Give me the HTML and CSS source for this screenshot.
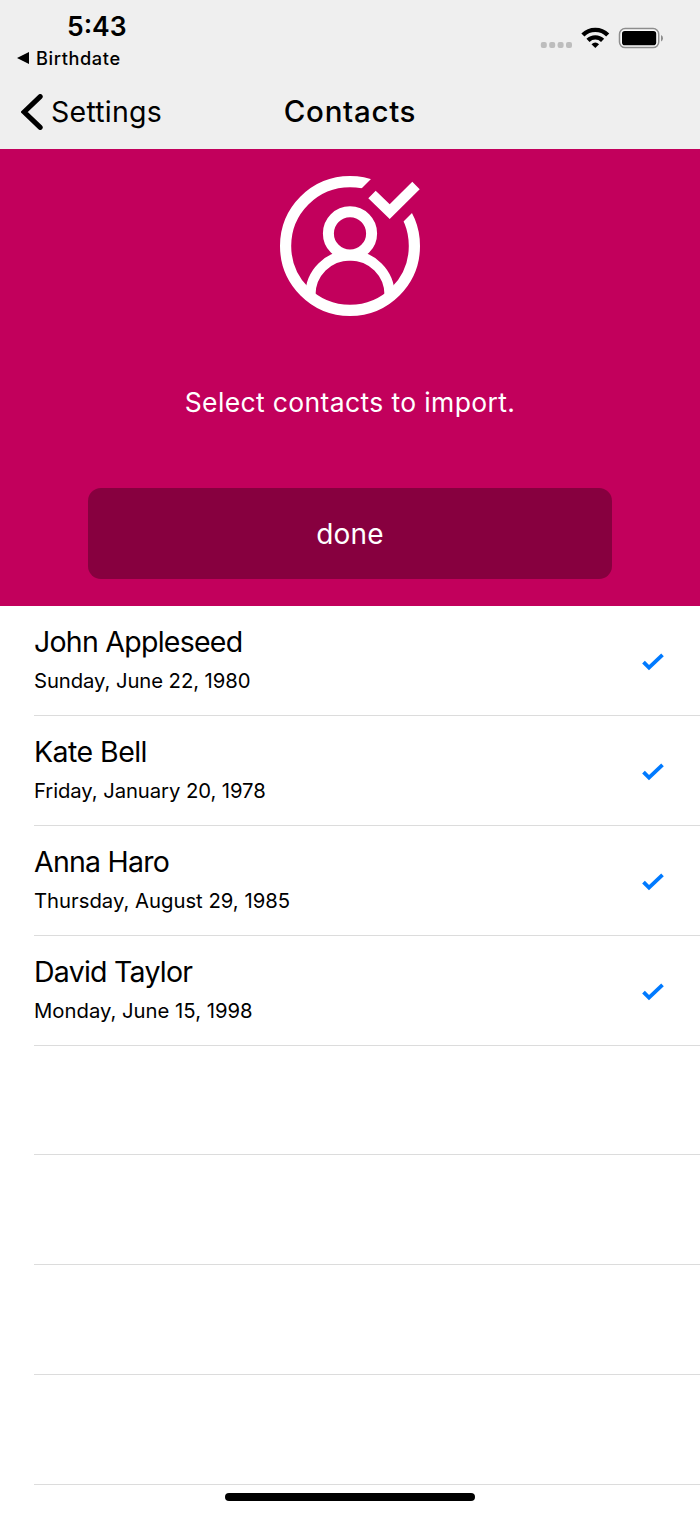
FILE: index.html
```html
<!DOCTYPE html>
<html lang="en">
<head>
<meta charset="utf-8">
<title>Contacts</title>
<link rel="stylesheet" href="styles.css">
</head>
<body>
<div class="screen">
  <header class="header">
    <div class="status">
      <div class="status-left">
        <div class="time">5:43</div>
        <div class="return"><svg class="return-icon" viewBox="0 0 12 12"><path d="M0 6 12 0V12Z"/></svg><span>Birthdate</span></div>
      </div>
      <svg class="status-icons" width="124" height="24" viewBox="540 26 124 24">
        <g fill="#bdbdbd"><rect x="540.8" y="42" width="6" height="6" rx="2"/><rect x="549.2" y="42" width="6" height="6" rx="2"/><rect x="557.6" y="42" width="6" height="6" rx="2"/><rect x="566" y="42" width="6" height="6" rx="2"/></g>
        <g fill="none" stroke="#000" stroke-width="4.4"><path d="M582.9 35A17.6 17.6 0 0 1 607.7 35"/><path d="M588 40.4A10.3 10.3 0 0 1 602.6 40.4"/></g>
        <path d="M591.5 44.2Q595.3 41 599.1 44.2L595.3 48Z"/>
        <rect x="619.5" y="28.6" width="39.2" height="19" rx="5.6" fill="#fafafa" stroke="#8d8d8d" stroke-width="1.5"/>
        <rect x="622" y="31" width="34.2" height="14.2" rx="2.8"/>
        <path d="M661 35Q663 36 663 38.2T661 41.4Z" fill="#8d8d8d"/>
      </svg>
    </div>
    <nav class="nav">
      <div class="back"><svg class="back-icon" viewBox="0 0 22 36"><path d="M19.2 2.6 3.2 18 19.2 33.4"/></svg><span class="back-label">Settings</span></div>
      <h1 class="title">Contacts</h1>
    </nav>
  </header>
  <section class="hero">
    <svg class="hero-icon" viewBox="280 176 140 140">
      <defs>
        <mask id="gap"><rect x="270" y="166" width="160" height="160" fill="#fff"/><path d="M380 170 358 192 372 205 402 223 432 193V170Z" fill="#000"/></mask>
        <clipPath id="disc"><circle cx="350" cy="246" r="65"/></clipPath>
      </defs>
      <g fill="none" stroke="#fff">
        <circle cx="350" cy="246" r="64.4" stroke-width="11.2" mask="url(#gap)"/>
        <circle cx="350" cy="233.4" r="21.6" stroke-width="11"/>
        <circle cx="350" cy="295" r="39.6" stroke-width="10.2" clip-path="url(#disc)"/>
      </g>
      <path d="M368.3 198.3 375.7 190.7 389.7 204.3 412.3 181.7 419.7 189.3 389.7 219Z" fill="#fff"/>
    </svg>
    <p class="prompt">Select contacts to import.</p>
    <button class="done">done</button>
  </section>
  <ul class="list">
    <li class="row"><div><div class="name">John Appleseed</div><div class="date tight">Sunday, June 22, 1980</div></div><svg class="check" viewBox="0 0 22 18"><path d="M1.5 9.2 7 14.6 20.5 1.8"/></svg></li>
    <li class="row"><div><div class="name loose">Kate Bell</div><div class="date tight">Friday, January 20, 1978</div></div><svg class="check" viewBox="0 0 22 18"><path d="M1.5 9.2 7 14.6 20.5 1.8"/></svg></li>
    <li class="row"><div><div class="name">Anna Haro</div><div class="date">Thursday, August 29, 1985</div></div><svg class="check" viewBox="0 0 22 18"><path d="M1.5 9.2 7 14.6 20.5 1.8"/></svg></li>
    <li class="row"><div><div class="name">David Taylor</div><div class="date">Monday, June 15, 1998</div></div><svg class="check" viewBox="0 0 22 18"><path d="M1.5 9.2 7 14.6 20.5 1.8"/></svg></li>
    <li class="row"></li>
    <li class="row"></li>
    <li class="row"></li>
    <li class="row"></li>
  </ul>
  <div class="home-bar"></div>
</div>
</body>
</html>
```
FILE: styles.css
```css
* { box-sizing: border-box; }
body { margin: 0; background: #fff; color: #000; font-family: Inter, "Liberation Sans", sans-serif; }
.screen { position: relative; width: 700px; height: 1515px; overflow: hidden; background: #fff; }
.header { height: 149px; background: #efefef; }
.status { display: flex; justify-content: space-between; height: 75px; padding: 9px 36px 0 17px; }
.status-icons { margin-top: 17px; }
.time { padding-left: 50px; font-size: 26.5px; line-height: 34px; font-weight: 600; }
.return { display: flex; align-items: center; gap: 7px; height: 30px; font-size: 18.2px; font-weight: 500; letter-spacing: 0.6px; }
.return-icon { width: 12px; height: 12px; }
.return span { line-height: 22px; }
.nav { display: grid; grid-template-columns: 1fr auto 1fr; align-items: center; height: 74px; padding: 0 21px; }
.back { display: flex; align-items: center; gap: 8px; font-size: 28.5px; letter-spacing: 0.25px; }
.back-label { line-height: 34px; }
.back-icon { width: 22px; height: 36px; fill: none; stroke: #000; stroke-width: 5; stroke-linecap: round; stroke-linejoin: miter; }
.title { margin: 0; padding-bottom: 2px; font-size: 29.5px; line-height: 36px; font-weight: 500; letter-spacing: 0.7px; }
.hero { display: flex; flex-direction: column; align-items: center; height: 457px; padding-top: 27px; background: #c2005c; color: #fff; }
.hero-icon { width: 140px; height: 140px; }
.prompt { margin: 66px 0 0; font-size: 26.5px; line-height: 40px; letter-spacing: 0.36px; }
.done { width: 524px; height: 91px; margin-top: 66px; padding: 0; border: 0; border-radius: 13px; background: #87003f; color: #fff; font: 400 28px Inter, sans-serif; letter-spacing: 0.2px; }
.list { margin: 0; padding: 0 0 0 34px; list-style: none; }
.row { display: flex; align-items: center; justify-content: space-between; height: 109.9px; padding-right: 36px; border-bottom: 1px solid #dcdcdc; }
.name { padding-bottom: 1px; font-size: 28.5px; line-height: 39px; letter-spacing: -0.75px; }
.name.loose { letter-spacing: -0.55px; }
.date { padding-top: 1px; font-size: 20.3px; line-height: 36px; }
.date.tight { letter-spacing: -0.08px; }
.check { width: 22px; height: 18px; margin-top: 3px; fill: none; stroke: #007aff; stroke-width: 3.8; }
.home-bar { position: absolute; left: 225px; top: 1493px; width: 250px; height: 8px; border-radius: 4px; background: #000; }
```
